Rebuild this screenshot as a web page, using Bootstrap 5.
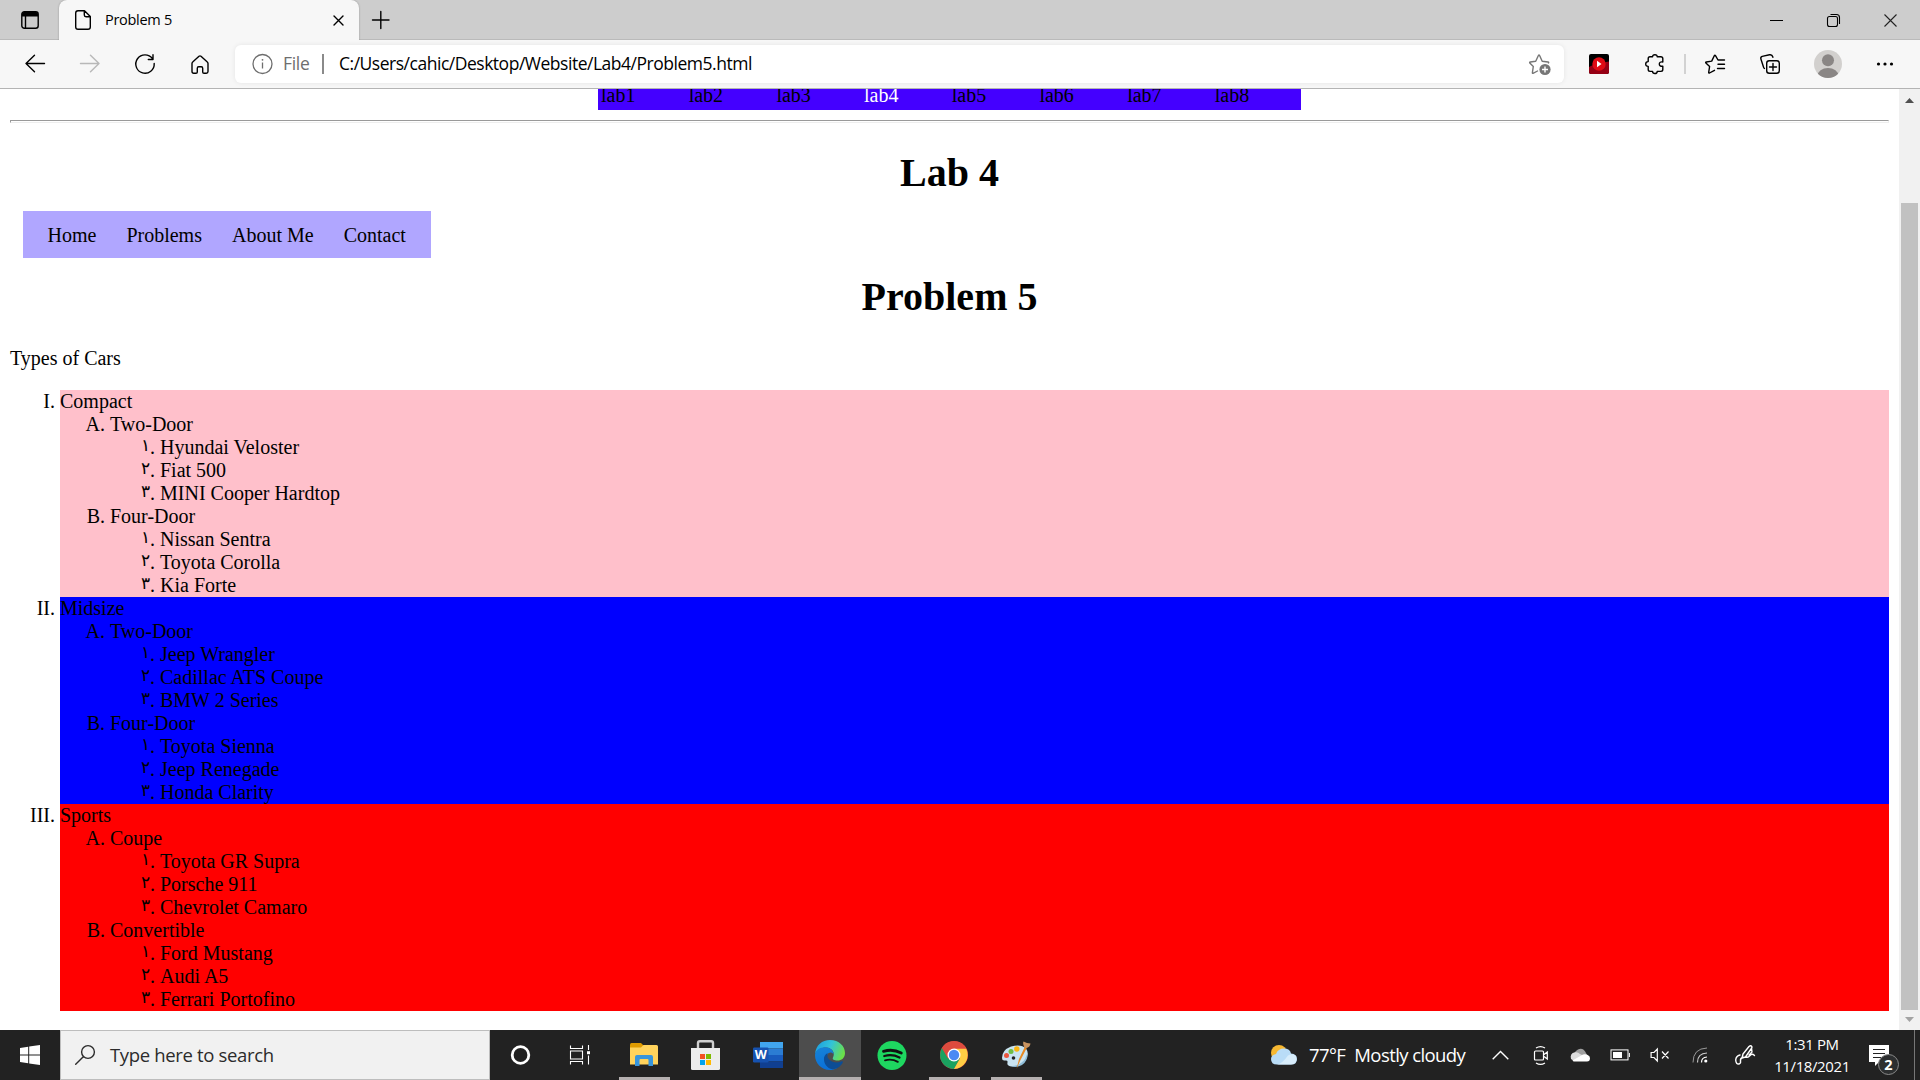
<!DOCTYPE html>
<html lang="en">
<head>
<meta charset="utf-8">
<title>Problem 5</title>
<link href="https://cdn.jsdelivr.net/npm/bootstrap@5.3.0/dist/css/bootstrap.min.css" rel="stylesheet">
<style>
  body { height: 1080px; width: 1920px; font-family: "Open Sans", "Noto Sans", sans-serif; color: #000; line-height: 1.2; background: #fff; }
  svg { display: block; overflow: visible; flex: none; }
  .ln { fill: none; stroke: currentColor; stroke-width: 1.4; stroke-linecap: round; stroke-linejoin: round; }
  /* tab strip */
  .strip { height: 40px; background: #cdcdcd; box-shadow: inset 0 -1px #bababa; }
  .strip-menu { width: 59px; }
  .page-tab { width: 300px; height: 40px; background: #f7f7f7; border-radius: 8px 8px 0 0; box-shadow: 0 0 2px rgba(0,0,0,.3); clip-path: inset(0 -3px 0 -3px); padding: 0 15px 0 16px; }
  .tab-title { font-size: 14.5px; letter-spacing: -.28px; margin-left: 14px; }
  .win-btn { width: 57px; }
  .win-set { padding-right: 1px; }
  /* toolbar */
  .tools { height: 49px; background: #f7f7f7; border-bottom: 1px solid #b4b4b4; padding-left: 7px; }
  .t55 { width: 55px; } .t56 { width: 56px; } .t60 { width: 60px; }
  .nudge { padding-right: 2px; }
  .address { width: 1329px; height: 38px; margin: 0 7px 0 8px; border-radius: 6px; background: #fff; box-shadow: 0 0 5px rgba(0,0,0,.08); padding: 0 13px 0 17px; font-size: 17.5px; }
  .scheme { color: #6e6e6e; margin-left: 10px; width: 38px; letter-spacing: -.3px; padding-bottom: 1px; }
  .bar-sep { width: 2px; height: 20px; background: #8a8a8a; margin: 0 15px 0 1px; }
  .url { letter-spacing: -.48px; padding-bottom: 1px; }
  .tool-sep { width: 2px; height: 20px; background: #d2d2d2; margin: 0 1px; }
  /* document */
  .view { height: 941px; }
  .doc { font-family: "Liberation Serif", serif; font-size: 20px; line-height: 23px; padding: 0 10px; }
  .labs { width: 703px; height: 21px; background: #40f; padding: 0 0 3px 3px; }
  .labs a { width: 87.7px; flex: none; color: #000; text-decoration: none; }
  .labs a.current { color: #fff; }
  .rule { height: 3px; margin-top: 10px; border: 1px solid; border-color: #9a9a9a #eee #eee #9a9a9a; }
  .doc h1 { font-size: 40px; line-height: 46px; font-weight: 700; margin: 0; }
  .doc h1.lab-title { margin-top: 27px; }
  .caption-line { margin: 27px 0 20px; }
  .site-nav { background: #b0a6ff; width: 408px; height: 47px; margin: 15px 0 16px 13px; padding: 2px 9.5px 0; }
  .site-nav a { color: #000; text-decoration: none; padding: 0 15px; white-space: nowrap; }
  .doc ol { margin: 0; padding-left: 50px; }
  .roman { list-style: upper-roman; } .alpha { list-style: upper-alpha; }
  /* the small raised numeral is drawn beside a bare full stop */
  @counter-style full-stop { system: cyclic; symbols: "."; suffix: " "; }
  .indic { list-style: full-stop; counter-reset: car; }
  .indic li { position: relative; counter-increment: car; }
  .indic li::before { content: counter(car, arabic-indic); position: absolute; left: -20px; top: -1px; width: 10px; text-align: center; font-size: 17px; line-height: 21px; }
  .pinkish { background: pink; } .bluish { background: #00f; } .reddish { background: red; }
  .scroller { width: 21px; background: #f1f1f1; padding: 9px 0 8px; }
  .thumb { width: 17px; height: 807px; background: #c1c1c1; margin-bottom: 7px; }
  /* taskbar */
  .taskbar { height: 50px; background: #222; color: #fff; }
  .start { width: 60px; }
  .find { width: 430px; height: 50px; background: #f1f1f1; border: 1px solid #bdbdbd; color: #2b2b2b; font-size: 18.5px; padding-left: 14px; }
  .find span { margin-left: 15px; letter-spacing: -.34px; }
  .s61 { width: 61px; } .s62 { width: 62px; } .s40 { width: 40px; } .s50 { width: 50px; }
  .task { height: 50px; }
  .task.open { background: linear-gradient(#b5b0b0, #b5b0b0) center bottom / 51px 3px no-repeat; }
  .task.active { background: #4d4d4d; border-bottom: 3px solid #b5b0b0; padding-top: 3px; }
  .weather { width: 210px; font-size: 18.5px; letter-spacing: -.58px; white-space: nowrap; }
  .weather .temp { margin-left: 11px; }
  .weather .sky { margin-left: 9px; }
  .clock { width: 84px; font-size: 15px; line-height: 22px; letter-spacing: -.4px; white-space: nowrap; padding-bottom: 1px; }
  .notes { width: 60px; height: 50px; }
  .desk-edge { width: 6px; height: 50px; border-left: 1px solid #777; }
</style>
<script src="https://cdn.jsdelivr.net/npm/bootstrap@5.3.0/dist/js/bootstrap.bundle.min.js"></script>
</head>
<body class="d-flex flex-column overflow-hidden">

<header>
  <div class="strip d-flex align-items-center">
    <div class="strip-menu d-flex justify-content-center">
      <svg width="18" height="18"><rect x=".8" y=".8" width="16.4" height="16.4" rx="2.5" class="ln"/><path d="M1 5.500V3Q1 1 3 1H15Q17 1 17 3V5.500Z"/><path d="M4.500 5V17" class="ln" stroke-width="1"/></svg>
    </div>
    <div class="page-tab d-flex align-items-center">
      <svg width="16" height="20"><path class="ln" d="M3 .7H9.500L15.300 6.500V17Q15.300 19.300 13 19.300H3Q.7 19.300 .7 17V3Q.7 .7 3 .7ZM9.300 1V5Q9.300 6.700 11 6.700H15"/></svg>
      <span class="tab-title">Problem 5</span>
      <svg class="ms-auto" width="11" height="11"><path class="ln" d="M1 1L10 10M10 1L1 10"/></svg>
    </div>
    <svg class="ms-2 ps-1" width="22" height="18"><path class="ln" d="M1.500 9H18M9.800 .5V17.500"/></svg>
    <div class="win-set ms-auto d-flex align-items-center">
      <div class="win-btn d-flex justify-content-center"><svg width="13" height="13"><path d="M0 6.500H13" stroke="#000"/></svg></div>
      <div class="win-btn d-flex justify-content-center"><svg width="13" height="13"><path fill="none" stroke="#000" stroke-width="1.100" d="M2.500 2.500H8.500Q10.500 2.500 10.500 4.500V10.500Q10.500 12.500 8.500 12.500H2.500Q.5 12.500 .5 10.500V4.500Q.5 2.500 2.500 2.500M3.500 .5H9.500Q12.500 .5 12.500 3.500V10"/></svg></div>
      <div class="win-btn d-flex justify-content-center"><svg width="13" height="13"><path d="M.5 .5L12.500 12.500M12.500 .5L.5 12.500" stroke="#222" stroke-width="1.100"/></svg></div>
    </div>
  </div>

  <div class="tools d-flex align-items-center">
    <div class="t55 d-flex justify-content-center"><svg width="20" height="18"><path class="ln" d="M19.500 8.500H1M9.500 .2L1 8.500L9.500 16.800"/></svg></div>
    <div class="t55 d-flex justify-content-center text-black-50 opacity-50"><svg width="20" height="18"><path class="ln" d="M.5 8.500H19M10.500 .2L19 8.500L10.500 16.800"/></svg></div>
    <div class="t55 d-flex justify-content-center"><svg width="20" height="20"><path class="ln" d="M19.200 9.500A9.200 9.200 0 1 1 17.500 4.700M18 .8V5.500H13.300"/></svg></div>
    <div class="t55 d-flex justify-content-center"><svg width="18" height="19"><path class="ln" d="M1 8.500Q1 7.600 1.700 7L8 1.300Q9 .5 10 1.300L16.300 7Q17 7.600 17 8.500V16.500Q17 18.200 15.300 18.200H13Q11.700 18.200 11.700 17V13.200Q11.700 11.700 10.300 11.700H7.700Q6.300 11.700 6.300 13.200V17Q6.300 18.200 5 18.200H2.700Q1 18.200 1 16.500Z"/></svg></div>
    <div class="address d-flex align-items-center">
      <svg width="21" height="21" color="#6e6e6e"><circle cx="10.500" cy="10" r="9.500" fill="none" stroke="#6e6e6e" stroke-width="1.300"/><path stroke="#6e6e6e" stroke-width="1.300" d="M10.500 8.500V14.500"/><circle cx="10.500" cy="5.800" r=".9" fill="#6e6e6e"/></svg>
      <span class="scheme">File</span>
      <span class="bar-sep"></span>
      <span class="url">C:/Users/cahic/Desktop/Website/Lab4/Problem5.html</span>
      <svg class="ms-auto" width="22" height="21" color="#767676"><path class="ln" d="M8.500 17L4 19.300Q3.300 19.500 3.400 18.700L4.300 12.500L.8 9Q.3 8.300 1.300 8L6.700 7.200L9.400 1.500Q10 .5 10.600 1.500L13.200 7.200L19 8Q20 8.200 19.500 9"/><circle cx="16" cy="15.500" r="5.600" fill="#767676"/><path d="M16 12.500V18.500M13 15.500H19" stroke="#fff" stroke-width="1.400"/></svg>
    </div>
    <div class="t56 d-flex justify-content-center"><svg width="20" height="20"><rect width="20" height="20" rx="2" fill="#000"/><path d="M0 13L6 10L20 7.500V18Q20 20 18 20H2Q0 20 0 18Z" fill="#960014"/><circle cx="10" cy="10" r="6.700" fill="#e00b14"/><path d="M8 6.800V13.200L12.500 10Z" fill="#fff"/></svg></div>
    <div class="t56 d-flex justify-content-center"><svg width="20" height="20"><path class="ln" d="M5 2.800H7.600Q7.500 .7 9.900 .7T12.200 2.800H15.800Q17.800 2.800 17.800 4.600V8Q14.300 7.500 14.300 10T17.800 12.200V15.600Q17.800 17.400 16 17.400H12.200Q12.200 19.500 9.900 19.500T7.600 17.400H5Q3.200 17.400 3.200 15.600V12.400Q.7 12.400 .7 10T3.200 7.600V4.600Q3.200 2.800 5 2.800"/></svg></div>
    <span class="tool-sep"></span>
    <div class="t56 d-flex justify-content-center"><svg width="20" height="20"><path class="ln" d="M9.500 16.300L4.500 19Q3.600 19.300 3.700 18.300L4.600 12.500L.9 9Q.3 8.200 1.300 8L6.700 7.100L9.300 1.700Q9.900 .7 10.500 1.700L13 6H19.500M13 10.200H19.500M12.500 14.500H19.500"/></svg></div>
    <div class="t55 nudge d-flex justify-content-center"><svg width="20" height="20"><rect class="ln" x="6.700" y="6.700" width="12.600" height="12.600" rx="2.500"/><path class="ln" d="M13 9.500V16.500M9.500 13H16.500M4.500 14.500Q3.700 14 3.400 12.800L.9 5Q.3 3 2.200 2.400L9.500 .8Q12 .2 13 3.200"/></svg></div>
    <div class="t60 d-flex justify-content-center"><svg width="28" height="28"><defs><clipPath id="face"><circle cx="14" cy="14" r="14"/></clipPath></defs><g clip-path="url(#face)"><rect width="28" height="28" fill="#d2d0ce"/><circle cx="14" cy="10.300" r="6" fill="#8a8685"/><ellipse cx="14" cy="26" rx="10.500" ry="8" fill="#8a8685"/></g></svg></div>
    <div class="t55 nudge d-flex justify-content-center"><svg width="18" height="4"><circle cx="2.500" cy="2" r="1.600"/><circle cx="9" cy="2" r="1.600"/><circle cx="15.500" cy="2" r="1.600"/></svg></div>
  </div>
</header>

<div class="view d-flex">
  <main class="doc flex-grow-1">
    <nav class="labs d-flex align-items-end mx-auto overflow-hidden"><a>lab1</a><a>lab2</a><a>lab3</a><a class="current">lab4</a><a>lab5</a><a>lab6</a><a>lab7</a><a>lab8</a></nav>
    <div class="rule"></div>
    <h1 class="lab-title text-center">Lab 4</h1>
    <nav class="site-nav d-flex align-items-center"><a>Home</a><a>Problems</a><a>About Me</a><a>Contact</a></nav>
    <h1 class="text-center">Problem 5</h1>
    <p class="caption-line">Types of Cars</p>
    <ol class="roman">
      <li class="pinkish">Compact
        <ol class="alpha">
          <li>Two-Door<ol class="indic"><li>Hyundai Veloster</li><li>Fiat 500</li><li>MINI Cooper Hardtop</li></ol></li>
          <li>Four-Door<ol class="indic"><li>Nissan Sentra</li><li>Toyota Corolla</li><li>Kia Forte</li></ol></li>
        </ol>
      </li>
      <li class="bluish">Midsize
        <ol class="alpha">
          <li>Two-Door<ol class="indic"><li>Jeep Wrangler</li><li>Cadillac ATS Coupe</li><li>BMW 2 Series</li></ol></li>
          <li>Four-Door<ol class="indic"><li>Toyota Sienna</li><li>Jeep Renegade</li><li>Honda Clarity</li></ol></li>
        </ol>
      </li>
      <li class="reddish">Sports
        <ol class="alpha">
          <li>Coupe<ol class="indic"><li>Toyota GR Supra</li><li>Porsche 911</li><li>Chevrolet Camaro</li></ol></li>
          <li>Convertible<ol class="indic"><li>Ford Mustang</li><li>Audi A5</li><li>Ferrari Portofino</li></ol></li>
        </ol>
      </li>
    </ol>
  </main>
  <aside class="scroller d-flex flex-column align-items-center">
    <svg width="9" height="5"><path d="M0 5L4.500 0L9 5Z" fill="#505050"/></svg>
    <div class="thumb mt-auto"></div>
    <svg width="9" height="5"><path d="M0 0L4.500 5L9 0Z" fill="#a3a3a3"/></svg>
  </aside>
</div>

<footer class="taskbar d-flex align-items-center">
  <div class="start d-flex justify-content-center"><svg width="20" height="20"><path fill="#fff" d="M0 2.900L8.200 1.700V9.500H0ZM9.200 1.500L20 0V9.500H9.200ZM0 10.500H8.200V18.300L0 17.100ZM9.200 10.500H20V20L9.200 18.500Z"/></svg></div>
  <div class="find d-flex align-items-center"><svg width="20" height="20"><circle cx="13" cy="7" r="6.400" class="ln"/><path class="ln" d="M8.300 11.700L.7 19.300"/></svg><span>Type here to search</span></div>
  <div class="task s61 d-flex align-items-center justify-content-center"><svg width="20" height="20"><circle cx="9.500" cy="10" r="8.300" fill="none" stroke="#fff" stroke-width="2.800"/></svg></div>
  <div class="task s62 d-flex align-items-center justify-content-center pe-1"><svg width="20" height="20"><path d="M.5 .5V3.500H12.500V.5M.5 19.500V16.500H12.500V19.500M.5 6H12.500V14H.5ZM18.500 0V5M18.500 10.500V19.500" fill="none" stroke="#fff" stroke-width="1.100"/><rect x="17" y="6.200" width="3" height="3" fill="#fff"/></svg></div>
  <div class="task open s62 d-flex align-items-center justify-content-center"><svg width="28" height="24"><path d="M0 2Q0 0 1.500 0H11L14 3V7H0Z" fill="#df9b00"/><path d="M0 4.500H11L13.500 2H26.500Q28 2 28 3.500V21.500H0Z" fill="#ffd35c"/><path d="M5 23V14Q5 12 7 12H21Q23 12 23 14V23H18.500V17Q18.500 16 17.500 16H10.500Q9.500 16 9.500 17V23Z" fill="#3795dc"/></svg></div>
  <div class="task s62 nudge d-flex align-items-center justify-content-center"><svg width="29" height="30"><path d="M7 10V3Q7 1.200 8.800 1.200H20.200Q22 1.200 22 3V10" fill="none" stroke="#cfcfcf" stroke-width="2.400"/><path d="M0 8H29V28.500Q29 30 27.500 30H1.500Q0 30 0 28.500Z" fill="#ececec"/><path fill="#f25022" d="M9 14H14V19H9Z"/><path fill="#7fba00" d="M15 14H20V19H15Z"/><path fill="#00a4ef" d="M9 20H14V25H9Z"/><path fill="#ffb900" d="M15 20H20V25H15Z"/></svg></div>
  <div class="task s62 d-flex align-items-center justify-content-center"><svg width="30" height="26"><path fill="#41a5ee" d="M7 0H30V6.500H7Z"/><path fill="#2b7cd3" d="M7 6.500H30V13H7Z"/><path fill="#185abd" d="M7 13H30V19.500H7Z"/><path fill="#103f91" d="M7 19.500H30V26H7Z"/><rect y="5.500" width="15.500" height="15" rx="1.200" fill="#1652b0"/><text x="7.800" y="17.300" text-anchor="middle" font-size="12.500" font-weight="700" fill="#fff">W</text></svg></div>
  <div class="task active s62 d-flex align-items-center justify-content-center"><svg width="30" height="30"><defs><linearGradient id="eg" x1="0" x2="1" y1=".2" y2=".5"><stop offset="0" stop-color="#1b9de2"/><stop offset=".5" stop-color="#33c3d8"/><stop offset="1" stop-color="#6be048"/></linearGradient><linearGradient id="eb" x1="0" y1="0" x2=".4" y2="1"><stop offset="0" stop-color="#1784d8"/><stop offset="1" stop-color="#0a70d8"/></linearGradient></defs><path fill="url(#eg)" d="M0 14C1 5 7 0 15 0C24 0 30 6 30 13C30 18 26.500 20.500 22.500 20.500C19 20.500 17 19.500 18 17.500C20.500 13 17 7.500 11 7.500C6 7.500 2 10 0 14Z"/><path fill="url(#eb)" d="M0 15C.5 10 5 7.300 10 7.300C15 7.300 18.500 10.500 18.500 14C15.500 10 10 14 12 20C13.500 25 18 28 22 28C19.500 29.500 17 30 15 30C6 30 0 23 0 15Z"/><path fill="#0d4d95" d="M12.500 13C10 14.500 8.500 17 9 20C9.500 26 15 30 19 29C23 28.500 26.500 25.500 28 22C28 21 27 21 26 21.500C20 24 14 21 12.500 17Z"/></svg></div>
  <div class="task s62 d-flex align-items-center justify-content-center"><svg width="29" height="29"><circle cx="14" cy="14.500" r="14.500" fill="#1ed760"/><path d="M5.500 10.300Q15 7.600 23.300 12" fill="none" stroke="#111" stroke-width="2.800" stroke-linecap="round"/><path d="M6.300 15Q14.300 12.800 21.500 16.500" fill="none" stroke="#111" stroke-width="2.300" stroke-linecap="round"/><path d="M7 19.300Q14 17.500 19.800 20.800" fill="none" stroke="#111" stroke-width="1.900" stroke-linecap="round"/></svg></div>
  <div class="task open s62 d-flex align-items-center justify-content-center"><svg width="28" height="28"><circle cx="14" cy="14" r="14" fill="#dd4b3e"/><path d="M1.900 7A14 14 0 0 0 14 28L20 17.500L14 14L8 17.500Z" fill="#1aa260"/><path d="M26.100 7.500A14 14 0 0 1 14 28L20 17.500L14 7.500Z" fill="#ffce44"/><path d="M2.200 6.700L8.400 17.500L14 7.500H26.300A14 14 0 0 0 2.200 6.700Z" fill="#dd4b3e"/><circle cx="14" cy="14" r="6.500" fill="#fff"/><circle cx="14" cy="14" r="5.200" fill="#4a8af4"/></svg></div>
  <div class="task open s62 d-flex align-items-center justify-content-center"><svg width="30" height="28"><path d="M1 17Q1 9 10 5.500Q20 2.500 25 7.500Q29 13 24 20Q19 26 11 25.500Q5.500 25 6.500 21.500Q7 19 4 19.500Q1 20 1 17Z" fill="#c9e4f2"/><path d="M10 25.300Q19 25 24 18L26.500 12Q27 20 21 24Q16 27 10 25.300Z" fill="#8fbdd8"/><circle cx="5.500" cy="14.500" r="2.500" fill="#e9573f"/><circle cx="10" cy="10.500" r="2.500" fill="#6ebe45"/><circle cx="15.800" cy="8" r="2.700" fill="#fbb612"/><circle cx="12.500" cy="17" r="1.800" fill="#222"/><path d="M15.500 28L18 18L24 5.500L26 6.500L19 20Z" fill="#e88a24"/><path d="M23.200 6Q21.500 2 22.500 .5Q26 2.500 29.500 2.500Q29 6 25.800 7Z" fill="#c89360"/></svg></div>

  <div class="weather ms-auto d-flex align-items-center">
    <svg width="28" height="20"><circle cx="9" cy="8" r="8" fill="#f7b832"/><path d="M7 19.500Q1 19.500 1 14Q1 10 6 9Q8 3.500 14 3.500Q20 3.500 21 8.500Q27 9 27 14Q27 19.500 21 19.500Z" fill="#b9dcf7"/><path d="M7 19.500Q12 19 18 10.500Q23 8 26 11Q28 19.500 21 19.500Z" fill="#d8edfb"/></svg>
    <span class="temp">77°F</span><span class="sky">Mostly cloudy</span>
  </div>
  <div class="s40 d-flex justify-content-center"><svg width="17" height="10"><path d="M.7 9.300L8.500 1.500L16.300 9.300" fill="none" stroke="#fff" stroke-width="1.400"/></svg></div>
  <div class="s40 d-flex justify-content-center"><svg width="15" height="19"><path fill="none" stroke="#fff" stroke-width="1.200" d="M2.500 5H9.500Q10.500 5 10.500 6V13Q10.500 14 9.500 14H2.500Q1.500 14 1.500 13V6Q1.500 5 2.500 5ZM11 8.500L14.300 6V13L11 10.500M3 2Q7.500 -.8 12 2M3 17Q7.500 19.800 12 17"/></svg></div>
  <div class="s40 d-flex justify-content-center"><svg width="20" height="14"><path d="M4 10Q3 4 8 1.500Q13-1 16 5L18 9Z" fill="#a0a0a0"/><path d="M1 11Q-.5 5.500 5 4.300Q8 3.800 10 6L14 8L4 13Z" fill="#ddd"/><path d="M2.500 12.500L13 6.500Q18.500 5.500 20 10Q20 13.500 17 13.500H4Q3 13.500 2.500 12.500Z" fill="#fff"/></svg></div>
  <div class="s40 d-flex justify-content-center"><svg width="20" height="12"><rect x="1" y=".9" width="17" height="10" fill="none" stroke="#fff"/><rect x="3" y="3" width="9" height="6" fill="#fff"/><path d="M19.400 4V8" stroke="#fff"/></svg></div>
  <div class="s40 d-flex justify-content-center"><svg width="19" height="14"><path d="M.1 4.500H3L6.300 1V13L3 9.500H.1ZM11 3.500L17.500 10.500M17.500 3.500L11 10.500" fill="none" stroke="#fff" stroke-width="1.200"/></svg></div>
  <div class="s40 d-flex justify-content-center"><svg width="16" height="16"><circle cx="13.800" cy="14" r="1.600" fill="#fff"/><path d="M9.500 15.500Q9.500 10.300 15 10" fill="none" stroke="#fff" stroke-width="1.200"/><path d="M5.500 15.500Q5.500 6.300 15 6" fill="none" stroke="#ccc" stroke-width="1.200"/><path d="M1 15.500Q1 1.500 15 1" fill="none" stroke="#999"/></svg></div>
  <div class="s50 d-flex justify-content-center"><svg width="20" height="20"><path class="ln" d="M7 13L8 9L14 1.500Q16-.2 17 2Q17 3 16 4L10.500 12L7 13ZM16.500 3L17 7L14 10M5 10Q1 11 .7 15Q1 19.500 4 19Q6 18.500 5.500 16T8 12M11 12Q13 13 15 10.500T19.500 10.500"/></svg></div>
  <div class="clock text-center">1:31 PM<br>11/18/2021</div>
  <div class="notes"><svg width="60" height="50"><path d="M15 15H35V32H25L21 36V32H15Z" fill="#fff"/><path d="M19 19.500H31M19 23.500H31M19 27.500H27" stroke="#222" stroke-width="1.200"/><circle cx="34.500" cy="34.500" r="10" fill="#2d2f30" stroke="#8a8a8a"/><text x="34.500" y="39.700" text-anchor="middle" font-size="14.500" font-weight="700" fill="#fff">2</text></svg></div>
  <div class="desk-edge"></div>
</footer>
</body>
</html>
